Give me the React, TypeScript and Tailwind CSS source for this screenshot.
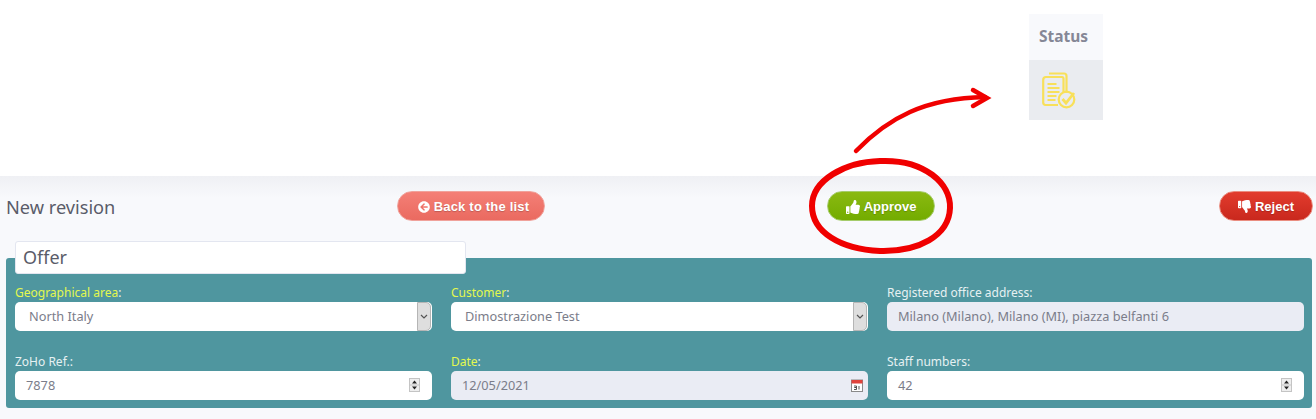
import type { ReactNode } from 'react'
import { FaArrowCircleLeft, FaThumbsDown, FaThumbsUp } from 'react-icons/fa'

const SANS = "font-['Noto_Sans',sans-serif]"

function StatusIcon() {
  return (
    <svg width="34" height="37" viewBox="0 0 34 37" fill="none" stroke="#f8e05a" strokeWidth="2.200">
      <path d="M7 1.500h15c1.500 0 2.500 1 2.500 2.500v17" />
      <path d="M4 5h16c1 0 1.500 .8 1.500 1.800V21M16 33H3.500C2 33 1.200 32 1.200 30.500V8C1.200 6 2.400 5 4 5" />
      <path d="M5.500 12h9M5.500 16h12M5.500 20h12M5.500 24h9M5.500 28h8" strokeWidth="2" />
      <circle cx="24.500" cy="27.500" r="7.800" />
      <path d="M20.500 27l3.500 4 8-10" strokeWidth="2.800" />
    </svg>
  )
}

function Spinner() {
  return (
    <svg className="absolute right-[12px] top-[7px]" width="11" height="14" viewBox="0 0 11 14">
      <rect x="0.500" y="0.500" width="10" height="13" fill="#eeeeee" stroke="#c4c4c4" />
      <path d="M0.500 7h10" stroke="#c4c4c4" />
      <path d="M5.500 2.500L8 5.500H3z" fill="#222" />
      <path d="M5.500 11.500L8 8.500H3z" fill="#222" />
    </svg>
  )
}

function CalendarIcon() {
  return (
    <svg className="absolute right-[5px] top-[8px]" width="12" height="13" viewBox="0 0 12 13">
      <rect x="0.500" y="1" width="11" height="11.500" fill="#fff" stroke="#8a8a8a" />
      <rect x="0.500" y="1" width="11" height="3.500" fill="#e0433c" />
      <path d="M3 7h2.500v1.500H3.500M3.500 8.500H5.500V10.500H3M8 7v3.500" fill="none" stroke="#444" strokeWidth="0.900" />
    </svg>
  )
}

function Field({
  label,
  highlight,
  children,
}: {
  label: string
  highlight?: boolean
  children: ReactNode
}) {
  return (
    <div className="flex flex-col">
      <label className={`h-[20px] text-[12px] leading-[21px] ${highlight ? 'text-[#e4f84e]' : 'text-[#e6f1f2]'}`}>
        {label}
        {highlight && <span className="text-[#e6f1f2]">:</span>}
      </label>
      {children}
    </div>
  )
}

function Box({
  value,
  disabled,
  children,
}: {
  value: string
  disabled?: boolean
  children?: ReactNode
}) {
  return (
    <div
      className={`relative h-[29px] rounded-[5px] pl-[11px] text-[12.75px] leading-[29px] text-[#7b7d8a] ${
        disabled ? 'bg-[#eaecf4]' : 'bg-white'
      }`}
    >
      {value}
      {children}
    </div>
  )
}

function SelectBox({ value }: { value: string }) {
  return (
    <div className="relative h-[29px] rounded-[5px] bg-white pl-[14px] text-[12.75px] leading-[29px] text-[#7b7d8a]">
      {value}
      <span className="absolute right-[1px] top-0 flex h-[29px] w-[14px] items-center justify-center rounded-r-[5px] border border-[#b5b5b5] bg-[#dedede]">
        <svg width="8" height="5" viewBox="0 0 8 5" fill="none" stroke="#555" strokeWidth="1.200">
          <path d="M1 1l3 3 3-3" />
        </svg>
      </span>
    </div>
  )
}

function ActionButton({
  className,
  icon,
  label,
}: {
  className: string
  icon: ReactNode
  label: string
}) {
  return (
    <button
      type="button"
      className={`flex h-[30px] items-center justify-center gap-[4px] rounded-full pt-[1px] font-['Liberation_Sans',sans-serif] text-[13px] font-bold text-white [text-shadow:0_1px_1px_rgba(0,0,0,0.2)] ${className}`}
    >
      {icon}
      {label}
    </button>
  )
}

export default function App() {
  return (
    <div className={`relative h-[419px] w-[1316px] overflow-hidden bg-white ${SANS}`}>
      {/* tabella stato */}
      <div className="h-[176px] pl-[1029px] pt-[14px]">
        <div className="w-[74px]">
          <div className="h-[46px] bg-[#f8f9fc] pl-[10px] text-[15.500px] font-bold leading-[44px] text-[#858796]">
            Status
          </div>
          <div className="flex h-[60px] items-center bg-[#eaecf0] pl-[13px]">
            <StatusIcon />
          </div>
        </div>
      </div>

      <div className="h-[243px] bg-[linear-gradient(#eff0f4,#f8f9fc_22px)]">
        <div className="flex h-[65px] items-start pl-[6px] pr-[3px] pt-[15px]">
          <h1 className="w-[391px] text-[18.200px] font-normal leading-[33px] text-[#5a5c69]">New revision</h1>
          <ActionButton
            className="w-[148px] border border-[#f0a29b] bg-[linear-gradient(#f47f76,#ea6a60)] pl-[5px] tracking-[0.200px]"
            icon={<FaArrowCircleLeft className="text-[12px]" />}
            label="Back to the list"
          />
          <ActionButton
            className="ml-[282px] w-[108px] border border-[#a5cc6b] bg-[linear-gradient(#8ab911,#73ac00)]"
            icon={<FaThumbsUp className="text-[14px]" />}
            label="Approve"
          />
          <ActionButton
            className="ml-auto w-[94px] border border-[#ea8d80] bg-[linear-gradient(#e23c2e,#c9281d)]"
            icon={<FaThumbsDown className="text-[13px]" />}
            label="Reject"
          />
        </div>

        <div className="relative ml-[6px] mt-[17px] h-[150px] w-[1306px] rounded-[3px] bg-[#4f969f] pl-[9px] pr-[8px] pt-[24px]">
          <div className="absolute left-[9px] top-[-17px] h-[33px] w-[451px] rounded-[3px] border border-[#e3e6f0] bg-white pl-[7px] text-[18px] leading-[31px] text-[#5a5c69]">
            Offer
          </div>
          <div className="grid grid-cols-3 gap-x-[19px] gap-y-[20px]">
            <Field label="Geographical area" highlight>
              <SelectBox value="North Italy" />
            </Field>
            <Field label="Customer" highlight>
              <SelectBox value="Dimostrazione Test" />
            </Field>
            <Field label="Registered office address:">
              <Box value="Milano (Milano), Milano (MI), piazza belfanti 6" disabled />
            </Field>
            <Field label="ZoHo Ref.:">
              <Box value="7878">
                <Spinner />
              </Box>
            </Field>
            <Field label="Date" highlight>
              <Box value="12/05/2021" disabled>
                <CalendarIcon />
              </Box>
            </Field>
            <Field label="Staff numbers:">
              <Box value="42">
                <Spinner />
              </Box>
            </Field>
          </div>
        </div>
      </div>

      {/* annotazioni rosse sopra la pagina */}
      <svg className="absolute left-0 top-0" width="1316" height="419" fill="none" stroke="#f00000" strokeLinecap="round">
        <path d="M856 151C888 118 925 98 985 97" strokeWidth="4.500" />
        <path d="M973 90L987 98L973 106" strokeWidth="4.500" />
        <path
          d="M880 161C925 159 951 184 950 208C949 236 918 252 880 251C840 249 812 232 812 206C812 180 845 162 880 161Z"
          strokeWidth="6"
        />
      </svg>
    </div>
  )
}
